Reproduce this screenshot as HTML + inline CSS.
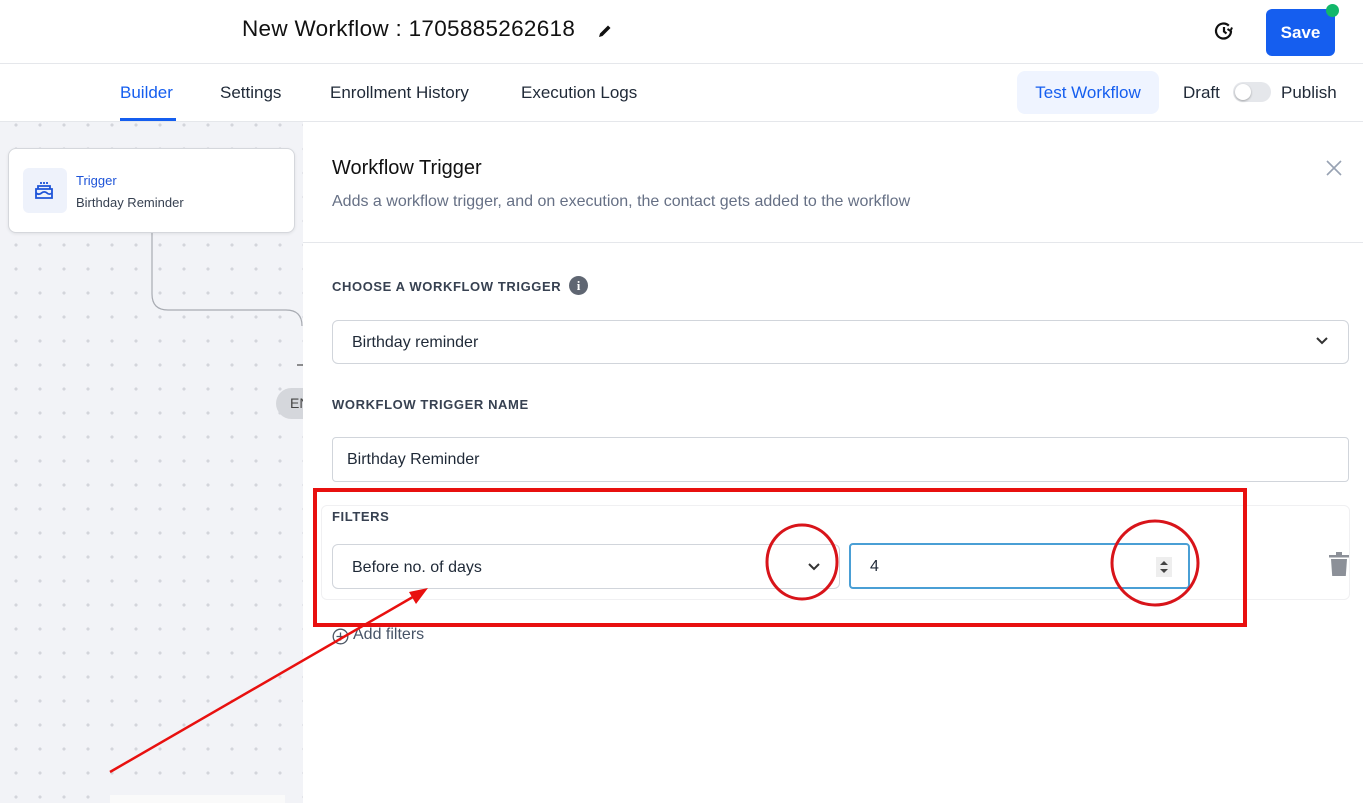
<!DOCTYPE html>
<html><head><meta charset="utf-8"><style>
*{box-sizing:border-box;margin:0;padding:0}
body{width:1363px;height:803px;overflow:hidden;background:#fff;font-family:"Liberation Sans",sans-serif;position:relative;color:#111827}
.abs{position:absolute}
.canvas{left:0;top:122px;width:303px;height:681px;background-color:#f2f3f7;background-image:radial-gradient(circle,#d3d5db 1.4px,transparent 1.8px);background-size:24px 24px;background-position:4px -9px}
.hdr1{left:0;top:0;width:1363px;height:64px;border-bottom:1px solid #e5e7eb}
.hdr2{left:0;top:64px;width:1363px;height:58px;border-bottom:1px solid #e5e7eb}
.tab{top:83px;font-size:17px;color:#1f2937}
.lbl{font-size:13px;font-weight:bold;letter-spacing:0.6px;color:#374151}
.input{border:1px solid #d1d5db;border-radius:4px;background:#fff;font-size:16px;color:#1f2937}
</style></head><body>
<div class="abs hdr1"></div>
<div class="abs" style="left:242px;top:16px;font-size:22.5px;color:#111;letter-spacing:0.3px">New Workflow : 1705885262618</div>
<svg class="abs" style="left:597px;top:23px" width="16" height="16" viewBox="0 0 16 16"><path d="M2 14 L3 10.5 L11 2.5 L13.5 5 L5.5 13 Z" fill="#111"/></svg>
<svg class="abs" style="left:1212px;top:19px" width="24" height="24" viewBox="0 0 24 24" fill="none" stroke="#111" stroke-width="2.2"><path d="M19 12a7.5 7.5 0 1 1-2.2-5.3"/><path d="M12 8v4.5l2.5 2"/><path d="M20 8.5l-1.5 3.5-3-2" stroke-width="2"/></svg>
<div class="abs" style="left:1266px;top:9px;width:69px;height:47px;background:#155eef;border-radius:6px;color:#fff;font-weight:bold;font-size:17px;text-align:center;line-height:47px">Save</div>
<div class="abs" style="left:1326px;top:4px;width:13px;height:13px;border-radius:50%;background:#12b76a"></div>
<div class="abs hdr2"></div>
<div class="abs tab" style="left:120px;color:#155eef">Builder</div>
<div class="abs" style="left:120px;top:118px;width:56px;height:3px;background:#155eef"></div>
<div class="abs tab" style="left:220px">Settings</div>
<div class="abs tab" style="left:330px">Enrollment History</div>
<div class="abs tab" style="left:521px">Execution Logs</div>
<div class="abs" style="left:1017px;top:71px;width:142px;height:43px;background:#eff4ff;border-radius:8px;color:#155eef;font-size:17px;text-align:center;line-height:43px">Test Workflow</div>
<div class="abs tab" style="left:1183px">Draft</div>
<div class="abs" style="left:1233px;top:82px;width:38px;height:20px;border-radius:10px;background:#e5e7eb"></div>
<div class="abs" style="left:1235px;top:84px;width:16px;height:16px;border-radius:50%;background:#fff;box-shadow:0 1px 2px rgba(0,0,0,.3)"></div>
<div class="abs tab" style="left:1281px">Publish</div>

<div class="abs canvas"></div>
<svg class="abs" style="left:0;top:122px" width="303" height="681"><path d="M152 110 V172 Q152 188 168 188 H286 Q302 188 302 204" fill="none" stroke="#a8abb2" stroke-width="1.2"/><path d="M297 243 H303" stroke="#555" stroke-width="1.3"/></svg>
<div class="abs" style="left:276px;top:388px;width:27px;height:31px;border-radius:16px 0 0 16px;background:#d5d7dc;font-size:14px;color:#444;line-height:31px;padding-left:14px;overflow:hidden;white-space:nowrap">EN</div>
<div class="abs" style="left:8px;top:148px;width:287px;height:85px;background:#fff;border:1px solid #d5d7dc;border-radius:8px;box-shadow:0 1px 3px rgba(0,0,0,.08)"></div>
<div class="abs" style="left:23px;top:168px;width:44px;height:45px;background:#eef2fb;border-radius:6px"></div>
<svg class="abs" style="left:33px;top:178px" width="22" height="24" viewBox="0 0 22 24" fill="none" stroke="#1e54d8" stroke-width="1.8"><path d="M3 11h16v9H3z"/><path d="M5 11V8h12v3"/><path d="M3 15c2 1.5 4 1.5 5.5 0s4-1.5 5.5 0 3.5 1.5 5 0"/><path d="M8 6V4M11 6V4M14 6V4"/></svg>
<div class="abs" style="left:76px;top:173px;font-size:13px;color:#1e54d8">Trigger</div>
<div class="abs" style="left:76px;top:195px;font-size:13px;color:#374151">Birthday Reminder</div>
<div class="abs" style="left:110px;top:795px;width:175px;height:8px;background:#fafafa"></div>

<div class="abs" style="left:303px;top:122px;width:1060px;height:121px;border-bottom:1px solid #e5e7eb"></div>
<div class="abs" style="left:332px;top:157px;font-size:20px;color:#111">Workflow Trigger</div>
<div class="abs" style="left:332px;top:193px;font-size:16px;color:#667085">Adds a workflow trigger, and on execution, the contact gets added to the workflow</div>
<svg class="abs" style="left:1325px;top:159px" width="18" height="18"><path d="M2 2L16 16M16 2L2 16" stroke="#98a2b3" stroke-width="1.6"/></svg>
<div class="abs lbl" style="left:332px;top:279px">CHOOSE A WORKFLOW TRIGGER</div>
<div class="abs" style="left:569px;top:276px;width:19px;height:19px;border-radius:50%;background:#5f6672;color:#fff;font-size:13px;font-weight:bold;text-align:center;line-height:19px;font-family:'Liberation Serif',serif">i</div>
<div class="abs input" style="left:332px;top:320px;width:1017px;height:44px;border-radius:6px;padding:13px 19px">Birthday reminder</div>
<svg class="abs" style="left:1315px;top:336px" width="14" height="10"><path d="M2 2L7 7L12 2" fill="none" stroke="#333" stroke-width="2"/></svg>
<div class="abs lbl" style="left:332px;top:397px">WORKFLOW TRIGGER NAME</div>
<div class="abs input" style="left:332px;top:437px;width:1017px;height:45px;padding:13px 14px">Birthday Reminder</div>
<div class="abs" style="left:321px;top:505px;width:1029px;height:95px;border:1px solid #f0f0f2;border-radius:6px"></div>
<div class="abs lbl" style="left:332px;top:509px">FILTERS</div>
<div class="abs input" style="left:332px;top:544px;width:508px;height:45px;border-radius:6px;padding:14px 19px">Before no. of days</div>
<svg class="abs" style="left:807px;top:562px" width="14" height="10"><path d="M2 2L7 7L12 2" fill="none" stroke="#333" stroke-width="2"/></svg>
<div class="abs input" style="left:849px;top:543px;width:341px;height:46px;border:2px solid #4a9fd5;padding:13px 19px">4</div>
<div class="abs" style="left:1156px;top:557px;width:16px;height:20px;background:#eee"></div>
<svg class="abs" style="left:1158px;top:559px" width="12" height="16"><path d="M2 6L6 2L10 6Z M2 10L6 14L10 10Z" fill="#444"/></svg>
<svg class="abs" style="left:1328px;top:552px" width="22" height="24" viewBox="0 0 22 24"><path d="M1 3h20v2.5H1zM8 0h6v3H8zM3 7h16l-1.2 17H4.2z" fill="#8c9098"/></svg>
<svg class="abs" style="left:332px;top:628px" width="17" height="17" fill="none" stroke="#4b5563" stroke-width="1.3"><circle cx="8.5" cy="8.5" r="7.3"/><path d="M8.5 4.5v8M4.5 8.5h8"/></svg>
<div class="abs" style="left:353px;top:626px;font-size:16px;color:#475467">Add filters</div>

<svg class="abs" style="left:0;top:0" width="1363" height="803" fill="none">
<rect x="315" y="490" width="930" height="135" stroke="#e8100f" stroke-width="4"/>
<ellipse cx="802" cy="562" rx="35" ry="37" stroke="#d8141a" stroke-width="3"/>
<ellipse cx="1155" cy="563" rx="43" ry="42" stroke="#d8141a" stroke-width="3"/>
<path d="M110 772L418 594" stroke="#e8100f" stroke-width="2.5"/>
<path d="M428 588L409 592L416 604Z" fill="#e8100f"/>
</svg>
</body></html>
